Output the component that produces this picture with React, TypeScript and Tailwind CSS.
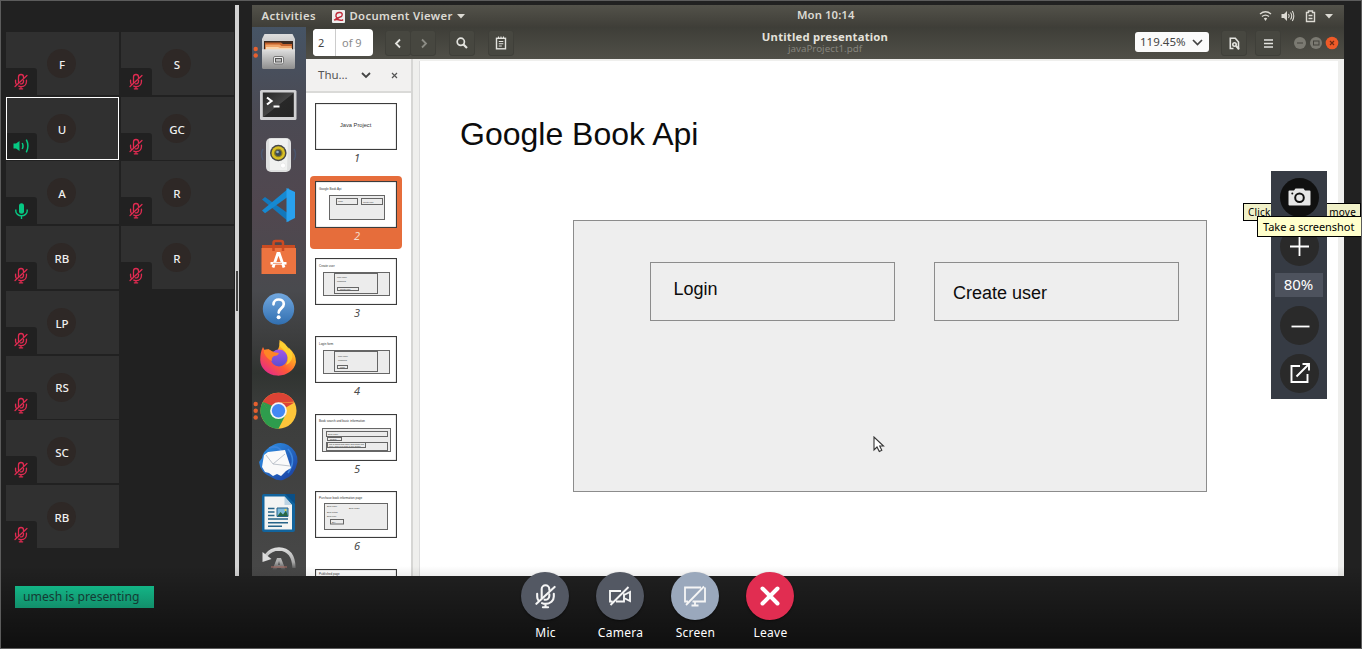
import React from "react";

const ui = "font-['Noto_Sans','Open_Sans',sans-serif]";

function MicOff({ className, stroke = 2.3 }: { className: string; stroke?: number }) {
  return (
    <svg className={className} viewBox="0 0 24 30" fill="none" stroke="currentColor" strokeWidth={stroke} strokeLinecap="round">
      <path d="M7.600 17V7a4.400 4.400 0 0 1 8.800 0v1M16.400 13v2a4.400 4.400 0 0 1-5.500 4.200" />
      <path d="M2.400 12.500v3q0 2 1 4M8 23.200q1.900.9 4 .9c5.500 0 9.600-3.700 9.600-8.600v-3M12 24.500V28M9 28h6M1.500 24L22.500 4.500" />
    </svg>
  );
}

function MicOn() {
  return (
    <svg className="h-4 w-[13px]" viewBox="0 0 13 16">
      <rect x="4" y="0.300" width="5" height="10.500" rx="2.500" fill="#06c983" />
      <path d="M.8 6.500V8a5.700 4.800 0 0 0 11.400 0V6.500M6.500 13v3" fill="none" stroke="#06c983" strokeWidth="1.400" />
    </svg>
  );
}

function Speaking() {
  return (
    <svg className="h-[14px] w-[17px]" viewBox="0 0 17 14" fill="none" stroke="#06c983" strokeWidth="1.500">
      <path d="M.5 4.500H3L6.500 2v10L3 9.500H.5z" fill="#06c983" stroke="none" />
      <path d="M9.200 4q1.600 3 0 6M13.300.7q3.200 6.300 0 12.600" />
    </svg>
  );
}

type Status = "off" | "on" | "talk";

function Tile({ name, status = "off" }: { name: string; status?: Status }) {
  const talking = status === "talk";
  return (
    <div className={"relative flex h-[63px] w-[113px] items-center justify-center bg-[#303030] " + (talking ? "outline outline-1 -outline-offset-1 outline-white" : "")}>
      <div className="mr-[3px] flex size-[29px] items-center justify-center rounded-full bg-[#2e2826] text-[11.500px] font-medium text-[#f0f0f0]">
        <span className="ml-[2px] mt-[2px]">{name}</span>
      </div>
      <div className={"absolute flex items-center justify-center rounded-tr-[3px] bg-[#212121] " + (talking ? "bottom-px left-px h-[26px] w-[30px] pr-px pt-px" : "bottom-0 left-0 h-[27px] w-[31px] pr-px")}>
        {status === "off" && <MicOff className="h-[17px] w-[14px] text-[#df2b51]" />}
        {status === "on" && <MicOn />}
        {talking && <Speaking />}
      </div>
    </div>
  );
}

const colA: [string, Status][] = [["F", "off"], ["U", "talk"], ["A", "on"], ["RB", "off"], ["LP", "off"], ["RS", "off"], ["SC", "off"], ["RB", "off"]];
const colB = ["S", "GC", "R", "R"];

function DockIcon({ children, h = 51 }: { children: React.ReactNode; h?: number }) {
  return (
    <svg width="54" height={h} viewBox={`0 0 54 ${h}`} className="shrink-0">
      {children}
    </svg>
  );
}

function Dock() {
  return (
    <div className="flex w-[54px] shrink-0 flex-col overflow-hidden bg-[linear-gradient(180deg,#465465_0%,#4b4a53_16%,#51474f_33%,#494a4e_48%,#3b3c3c_58%,#303431_63%,#3c3d3c_70%,#484848_100%)]">
      <DockIcon>
        <defs>
          <linearGradient id="cab" x2="0" y2="1"><stop stopColor="#dedede" /><stop offset="1" stopColor="#8e8e8e" /></linearGradient>
        </defs>
        <circle cx="3.700" cy="22" r="2.200" fill="#e6602f" /><circle cx="3.700" cy="28.500" r="2.200" fill="#e6602f" />
        <path d="M12.500 7h28l2.500 5v28a2 2 0 0 1-2 2H12a2 2 0 0 1-2-2V12z" fill="url(#cab)" />
        <path d="M12 14h29v10H12z" fill="#3d2a20" />
        <path d="M13 15.500h16l2 1.500h9v7H13z" fill="#c4622c" />
        <path d="M13.500 17.500h14l2 1.500h10v5h-26z" fill="#f0a468" />
        <path d="M14 20h12l2 1h12v3H14z" fill="#fbd5ac" />
        <path d="M10 22.500h33V40a2 2 0 0 1-2 2H12a2 2 0 0 1-2-2z" fill="url(#cab)" />
        <path d="M10 23h33" stroke="#ddd" />
        <rect x="21.500" y="29.500" width="10" height="7.500" rx="1.500" fill="#eee" stroke="#777" /><rect x="23.500" y="31.500" width="6" height="3.500" fill="#bbb" stroke="#555" />
      </DockIcon>
      <DockIcon>
        <defs><linearGradient id="term" x2="1" y2="1"><stop stopColor="#252525" /><stop offset=".5" stopColor="#444" /><stop offset=".52" stopColor="#282828" /><stop offset="1" stopColor="#252525" /></linearGradient></defs>
        <rect x="8" y="12" width="36.500" height="30" rx="1.500" fill="#d0d0d2" />
        <rect x="10.800" y="14.500" width="31" height="24.500" fill="url(#term)" />
        <path d="M15 19.500l4.500 3.500L15 26.500" stroke="#fff" strokeWidth="2.200" fill="none" /><path d="M21.500 28.500h6" stroke="#fff" strokeWidth="2" />
      </DockIcon>
      <DockIcon>
        <path d="M11 20q-3 5 0 11M42 20q3 5 0 11" stroke="#446899" strokeWidth="1.500" fill="none" opacity=".4" />
        <rect x="14" y="9" width="25" height="34" rx="5" fill="#dedfdf" />
        <path d="M17 10h19l-1 31H18z" fill="#f0f1f0" />
        <circle cx="26.300" cy="24" r="8.300" fill="#484848" /><circle cx="26.300" cy="24" r="6.800" fill="#d9c024" />
        <circle cx="26.300" cy="24" r="4.300" fill="#8c7d20" /><circle cx="26.300" cy="24" r="3" fill="#3c4a57" /><circle cx="25.500" cy="23" r="1.300" fill="#9ab0bf" />
        <circle cx="31" cy="36.500" r="2.500" fill="#fff" stroke="#ddd" strokeWidth=".5" />
      </DockIcon>
      <DockIcon>
        <path d="M10 19.500l3-2.500L37 34v8z" fill="#1378bc" />
        <path d="M10 30.500l3 2.800L37 16V8z" fill="#1689d2" />
        <path d="M34.500 8L43 12v26l-8.500 4.300V17z" fill="#29a1ee" />
      </DockIcon>
      <DockIcon>
        <path d="M21.500 20v-8q0-2 2-2h5.500q2 0 2 2v8" fill="none" stroke="#cc4a22" strokeWidth="2.500" />
        <path d="M10 14h33v4H10z" fill="#c94c22" /><path d="M9.500 17h34.500v26H9.500z" fill="#ed7440" />
        <path d="M21.500 20v-5M31 20v-5" stroke="#cc4a22" strokeWidth="2.500" />
        <path d="M21 36.500l4.800-14h1.400l4.800 14" fill="none" stroke="#fff" strokeWidth="2.800" /><path d="M18.500 32.300h16" stroke="#fff" strokeWidth="2.600" /><path d="M21 32.300h9" stroke="#ed7440" strokeWidth=".8" />
      </DockIcon>
      <DockIcon>
        <defs><linearGradient id="help" x2="0" y2="1"><stop stopColor="#72a8df" /><stop offset="1" stopColor="#316fb0" /></linearGradient></defs>
        <circle cx="26.500" cy="27" r="15.700" fill="url(#help)" />
        <path d="M21.500 22.300c0-6.500 10.300-6.200 10.300-.3 0 4.400-5.100 4.300-5.100 8.600" fill="none" stroke="#fff" strokeWidth="2.700" strokeLinecap="round" /><circle cx="26.600" cy="35.200" r="2" fill="#fff" />
      </DockIcon>
      <DockIcon>
        <defs>
          <linearGradient id="fox" x1="1" y1="0" x2=".2" y2="1"><stop stopColor="#fff04a" /><stop offset=".35" stopColor="#ffae22" /><stop offset=".65" stopColor="#ff5a35" /><stop offset="1" stopColor="#e22890" /></linearGradient>
          <linearGradient id="orb" x2="0" y2="1"><stop stopColor="#a257e8" /><stop offset="1" stopColor="#5a4ed0" /></linearGradient>
        </defs>
        <path d="M11 14l2 4 4-2 1 3q3-1 5 0 5-2 4.500-12 6.500 3 8.500 9l1-1q7 6 7 14A18 16 0 0 1 8.200 27q0-8 2.800-13z" fill="url(#fox)" />
        <circle cx="27" cy="25" r="8.500" fill="url(#orb)" />
        <path d="M12 17q5-2 9 2l6 1q-1 3-5 3-3 2-2 5-5-2-8-8z" fill="#ff8526" />
        <path d="M31 16q8 8 3 16 8-4 6-12-3-7-12-11-2 4 3 7z" fill="#ffd735" opacity=".8" />
      </DockIcon>
      <DockIcon>
        {[20, 26.700, 33.500].map((y) => <circle key={y} cx="3.700" cy={y} r="2.200" fill="#e6602f" />)}
        <circle cx="26.500" cy="26.700" r="18" fill="#fdc53a" />
        <path d="M26.500 26.700L10.900 17.700A18 18 0 0 1 42.100 17.700L26.500 18.500z" fill="#dc4335" />
        <path d="M10.900 17.700A18 18 0 0 0 26.500 44.700l7.100-14-7 3-7-3z" fill="#2e9c4d" />
        <path d="M10.900 17.700l8.500 13L27 18.500z" fill="#dc4335" /><path d="M10.900 17.700l8.500 14.500 4-9z" fill="#2e9c4d" />
        <path d="M19 18.500h23.500L33 24z" fill="#dc4335" />
        <circle cx="26.500" cy="26.700" r="8.400" fill="#f4f4f4" /><circle cx="26.500" cy="26.700" r="6.700" fill="#4388f4" />
      </DockIcon>
      <DockIcon>
        <defs><linearGradient id="bird" x2="1" y2="1"><stop stopColor="#3198ea" /><stop offset="1" stopColor="#193a9c" /></linearGradient></defs>
        <path d="M18 12q9-7 18-2 10 6 9.500 17Q43 41 31 45q-6 1-10-2Q8 38 7 27l3-4q1-7 8-11z" fill="url(#bird)" />
        <path d="M17 13q10-4 14 6M36 14q9 11 0 24" stroke="#3d86dd" strokeWidth="1.600" fill="none" />
        <path d="M12 20l4-3 17-2 6 18-5 3-5 5-4-2-4 2-4-3-4-1-3-5 1-6z" fill="#fafafa" />
        <path d="M14 20l7 9 12-10M21 29l17 2" fill="none" stroke="#b8bec7" strokeWidth=".9" />
      </DockIcon>
      <DockIcon>
        <path d="M12 8h23l8 9v27q0 2-2 2H12q-2 0-2-2V10q0-2 2-2z" fill="#12649d" /><path d="M33 8h10v10z" fill="#0a4f86" />
        <path d="M12.500 10.500h20L40 19v24.500H12.500z" fill="#f3f4f3" /><path d="M32.500 10.500V19H40z" fill="#bcd4e4" />
        <path d="M16 22.500h6.500M16 26h6.500M16 29.500h6.500M16 33h20M16 36.700h20M16 40.200h14" stroke="#266388" strokeWidth="1.500" />
        <path d="M25 22h11v8.500H25z" fill="#7dbadc" stroke="#266388" /><path d="M25.500 30l3-4 2.500 2.500 3-4 2 5.500z" fill="#286744" /><circle cx="33.500" cy="24" r="1" fill="#f5d73a" />
      </DockIcon>
      <DockIcon h={39}>
        <defs><linearGradient id="upd" gradientUnits="userSpaceOnUse" x1="0" y1="10" x2="0" y2="33"><stop stopColor="#e2e2e2" /><stop offset=".65" stopColor="#aaa" /><stop offset="1" stopColor="#484848" /></linearGradient></defs>
        <path d="M14 18.500q5-6.500 13-6.500Q41.500 12.500 42 31" fill="none" stroke="url(#upd)" strokeWidth="3.300" />
        <path d="M10.500 15l0 10 9-3z" fill="#ddd" /><path d="M20 34l5-13h4l5 13h-4l-1-3h-4l-1 3z" fill="url(#upd)" /><path d="M26 28l1-4 1 4z" fill="#555" /><path d="M19 30h16" stroke="#ae6e65" strokeWidth="2" opacity=".5" />
      </DockIcon>
    </div>
  );
}

function Box({ x, y, w, h }: { x: number; y: number; w: number; h: number }) {
  return <rect x={x + 0.5} y={y + 0.5} width={w} height={h} fill="#ececec" stroke="#666" strokeWidth="1" />;
}

function Lbl({ x, y, s = 3, children }: { x: number; y: number; s?: number; children: string }) {
  return <text x={x} y={y} fontSize={s} fill="#333" fontFamily="Liberation Sans, sans-serif">{children}</text>;
}

function Thumb({ n, selected, children }: { n?: number; selected?: boolean; children: React.ReactNode }) {
  return (
    <div className={"flex w-[92px] shrink-0 flex-col items-center rounded-[4px] pt-[5px] " + (n ? "h-[73px] " : "h-[12px] overflow-hidden ") + (selected ? "bg-[#e66d3b]" : "")}>
      <svg width="82" height="47" viewBox="0 0 82 47" className="shrink-0 bg-white">
        {children}
        <rect x=".5" y=".5" width="81" height="46" fill="none" stroke="#3c3c3c" strokeWidth="1.200" />
      </svg>
      {n && <span className={"ml-[2px] text-[11px] italic leading-[16px] " + (selected ? "text-[#f5dccb]" : "text-[#4c4c4c]")}>{n}</span>}
    </div>
  );
}

function Thumbs() {
  return (
    <div className="flex min-h-0 flex-1 flex-col items-center gap-[4.700px] overflow-hidden bg-white pr-[5px] pt-[5px]">
      <Thumb n={1}><Lbl x={25} y={24} s={5.700}>Java Project</Lbl></Thumb>
      <Thumb n={2} selected>
        <Lbl x={4} y={9} s={3}>Google Book Api</Lbl><Box x={14} y={14} w={55} h={24} /><Box x={21} y={17} w={21} h={6} /><Box x={46} y={17} w={21} h={6} /><Lbl x={23} y={21} s={2}>Login</Lbl><Lbl x={48} y={21.500} s={2}>Create user</Lbl>
      </Thumb>
      <Thumb n={3}>
        <Lbl x={4} y={8.500}>Create user</Lbl><Box x={8} y={14} w={66} h={23} /><Box x={19} y={15} w={43} h={20} /><Lbl x={22} y={20} s={2}>User name</Lbl><Lbl x={22} y={24} s={2}>Password</Lbl><Box x={22} y={29} w={21} h={3} /><Lbl x={25} y={32} s={2}>Create user</Lbl>
      </Thumb>
      <Thumb n={4}>
        <Lbl x={4} y={8.500}>Login form</Lbl><Box x={8} y={14} w={66} h={23} /><Box x={19} y={15} w={43} h={20} /><Lbl x={23} y={21} s={2}>User name</Lbl><Lbl x={23} y={25} s={2}>Password</Lbl><Box x={22} y={29} w={10} h={3} /><Lbl x={25} y={32} s={2}>Login</Lbl>
      </Thumb>
      <Thumb n={5}>
        <Lbl x={4} y={8}>Book search and basic information</Lbl><Box x={7} y={14} w={68} h={23} /><Box x={11} y={17} w={61} h={5} /><Lbl x={13} y={21} s={2}>Book name</Lbl><Box x={12} y={23} w={14} h={3} /><Lbl x={15} y={26} s={2}>Search</Lbl><Box x={11} y={28} w={61} h={8} /><Box x={12} y={28} w={38} h={5} /><Lbl x={14} y={30.500} s={2}>List of books with name and author and</Lbl><Lbl x={14} y={32.800} s={2}>price. Click on a book to see details</Lbl>
      </Thumb>
      <Thumb n={6}>
        <Lbl x={4} y={8}>Purchase book information page</Lbl><Box x={9} y={12} w={63} h={26} /><Lbl x={12} y={16} s={2}>Book name</Lbl><Lbl x={34} y={18} s={2}>Book image</Lbl><Lbl x={12} y={22} s={2}>Book author</Lbl><Lbl x={12} y={26} s={2}>Book price</Lbl><Box x={15} y={28} w={13} h={4.500} /><Lbl x={17} y={32} s={2}>Buy</Lbl>
      </Thumb>
      <Thumb><Lbl x={4} y={6}>Published page</Lbl></Thumb>
    </div>
  );
}

const headBtn = "flex h-[26px] w-[26px] items-center justify-center rounded-[3px] border border-[#3f3f39] bg-[#474740] text-[#e4e4df]";

function ViewerHeader() {
  return (
    <div className="grid h-8 shrink-0 grid-cols-[1fr_auto_1fr] items-center bg-gradient-to-b from-[#3e3e38] to-[#504f48]">
      <div className="flex items-center pl-[7px]">
        <div className="-mt-px flex h-[27px] w-[60px] overflow-hidden rounded-[4px] bg-white text-[11px] leading-[27px] text-[#444]">
          <span className="w-[23px] border-r border-[#ccc] bg-white pl-[5px]">2</span>
          <span className="pl-[6px] text-[#8b8b8b]">of 9</span>
        </div>
        <div className="ml-3 flex">
          <div className={headBtn}><svg width="8" height="11" viewBox="0 0 8 11"><path d="M6 1.500l-4 4 4 4" fill="none" stroke="currentColor" strokeWidth="1.800" /></svg></div>
          <div className={headBtn + " -ml-px"}><svg className="ml-0.5" width="8" height="11" viewBox="0 0 8 11"><path d="M2 1.500l4 4-4 4" fill="none" stroke="#8c8c85" strokeWidth="1.800" /></svg></div>
        </div>
        <div className={headBtn + " ml-[13px]"}><svg width="12" height="12" viewBox="0 0 12 12" fill="none" stroke="currentColor"><circle cx="4.800" cy="4.800" r="3.600" strokeWidth="1.700" /><path d="M7.500 7.500l3.500 3.500" strokeWidth="2.200" /></svg></div>
        <div className={headBtn + " ml-[13px]"}><svg width="12" height="14" viewBox="0 0 12 14" fill="none" stroke="currentColor"><rect x="1.500" y="2.300" width="9" height="10.500" strokeWidth="1.400" /><path d="M3.500.5v2M6 .5v2M8.500.5v2M3.800 5.500h4.500M3.800 7.800h4.500M3.800 10h3" strokeWidth="1.100" /></svg></div>
      </div>
      <div className="flex flex-col items-center">
        <span className="-mt-[3px] text-[11.300px] font-bold leading-[13px] tracking-[0.200px] text-[#e4e2dc]">Untitled presentation</span>
        <span className="text-[9.800px] leading-[11px] text-[#85847d]">javaProject1.pdf</span>
      </div>
      <div className="flex items-center justify-end pr-[5px]">
        <div className="-mt-[2px] flex h-[20px] w-[74px] items-center justify-between rounded-[3px] bg-[#fbfbfb] pl-[5px] pr-[6px] text-[11.500px] text-[#454545]">
          119.45%
          <svg width="11" height="7" viewBox="0 0 11 7"><path d="M1 1l4.500 4.500L10 1" fill="none" stroke="#444" strokeWidth="1.700" /></svg>
        </div>
        <div className={headBtn + " ml-3"}><svg width="11" height="13" viewBox="0 0 11 13" fill="none" stroke="currentColor" strokeWidth="1.600"><path d="M4.500 11.500H1.300V1.300h5L9.500 5v7.500" /><circle cx="5.500" cy="7.500" r="1.700" /><path d="M7 9l3 3" strokeWidth="2" /></svg></div>
        <div className={headBtn + " ml-2"}><svg width="9" height="9" viewBox="0 0 9 9"><path d="M0 1h9M0 4.500h9M0 8h9" stroke="currentColor" strokeWidth="1.500" /></svg></div>
        <svg className="-mt-px ml-[13px]" width="45" height="14" viewBox="0 0 45 14">
          <circle cx="6" cy="7" r="6" fill="#7b7a72" /><path d="M3 7h6" stroke="#44433d" />
          <circle cx="22" cy="7" r="6" fill="#7b7a72" /><rect x="19.500" y="5" width="5.500" height="4" fill="none" stroke="#44433d" />
          <circle cx="38" cy="7" r="6.300" fill="#ee5a28" /><path d="M36 5l4 4M40 5l-4 4" stroke="#6d2a12" strokeWidth="1.200" />
        </svg>
      </div>
    </div>
  );
}

function TopBar() {
  return (
    <div className="grid h-[22px] shrink-0 grid-cols-[545px_auto_1fr] items-center bg-gradient-to-b from-[#53524a] to-[#3f3e38] text-[11.300px] font-semibold text-[#dcdad3]">
      <div className="flex items-center pl-[9.500px]">
        <span className="w-[71px] tracking-[0.400px]">Activities</span>
        <svg className="-ml-px" width="13" height="13" viewBox="0 0 13 13"><rect width="13" height="13" rx="1" fill="#eee" /><path d="M2 10q3-1 5.500 0T11 9.500M7 8.500Q3.500 8 4 5t4-2.500 1.500 4L3.500 9" fill="none" stroke="#c02b3a" strokeWidth="1.400" /></svg>
        <span className="ml-[5px] tracking-[0.350px]">Document Viewer</span>
        <svg className="ml-1" width="8" height="5" viewBox="0 0 8 5"><path d="M0 0h8L4 4.500z" fill="#dcdad3" /></svg>
      </div>
      <span className="-mt-px tracking-[0.100px]">Mon 10:14</span>
      <svg className="mr-[10px] justify-self-end" width="76" height="14" viewBox="0 0 76 14" fill="none" stroke="#dcdad3" strokeWidth="1.400">
        <path d="M2 5q5.500-4.500 11 0M4 7.500q3.500-2.800 7 0" /><path d="M5.800 9.300q1.700-1 3.400 0L7.500 12z" fill="#dcdad3" stroke="none" />
        <path d="M23.500 5h2.500l3-3v10l-3-3h-2.500z" fill="#dcdad3" stroke="none" /><path d="M30.500 5q1.500 2 0 4M32.500 3.500q2.500 3.500 0 7M34.300 2q3 5 0 10" strokeWidth="1.100" />
        <path d="M48.500 12.500V3.500h2v-1.500h4v1.500h2v9z" /><path d="M50.500 6.500h4M50.500 9.500h4" strokeWidth="1.600" />
        <path d="M67 5h8l-4 4.500z" fill="#dcdad3" stroke="none" />
      </svg>
    </div>
  );
}

function Slide() {
  return (
    <div className="min-w-0 flex-1 border-l-2 border-[#d6d6d4] bg-[#efefed] pl-[6px] pr-[6px] pt-[2px]">
      <div className="relative h-full border-l border-[#dcdcdc] bg-white pl-[40px] pt-[53px] font-['Liberation_Sans',Arial,sans-serif] text-[#0c0c0c]">
        <div className="h-[40px] text-[32px] leading-[40px]">Google Book Api</div>
        <div className="ml-[113px] mt-[66px] flex h-[272px] w-[634px] gap-[39px] border border-[#8c8c8c] bg-[#eeeeee] pl-[76px] pt-[41px] text-[18px]">
          <div className="h-[59px] w-[245px] border border-[#8c8c8c] pl-[22.500px] pt-[13px] leading-[27px]">Login</div>
          <div className="h-[59px] w-[245px] border border-[#8c8c8c] pl-[18px] pt-[17px] leading-[27px]">Create user</div>
        </div>
        <svg className="absolute left-[453px] top-[375px]" width="12" height="17" viewBox="0 0 12 17"><path d="M1 1v13l3-3 2.300 4.500 2.500-1.200L6.700 10H10.500z" fill="#fff" stroke="#333" strokeWidth="1.100" /></svg>
      </div>
    </div>
  );
}

function SharedScreen() {
  return (
    <div className={"flex h-[571px] w-[1092px] flex-col overflow-hidden " + ui}>
      <TopBar />
      <div className="flex min-h-0 flex-1">
        <Dock />
        <div className="flex min-w-0 flex-1 flex-col">
          <ViewerHeader />
          <div className="flex min-h-0 flex-1">
            <div className="flex w-[105px] shrink-0 flex-col">
              <div className="flex h-[34px] shrink-0 items-center border-b-2 border-[#dadad8] bg-[#f2f1f0] pl-3 text-[11.500px] text-[#555]">
                <span className="w-[43px]">Thu…</span>
                <svg width="10" height="7" viewBox="0 0 10 7"><path d="M1 1l4 4 4-4" fill="none" stroke="#444" strokeWidth="1.800" /></svg>
                <svg className="ml-[20px]" width="7" height="7" viewBox="0 0 7 7"><path d="M1 1l5 5M6 1L1 6" stroke="#555" strokeWidth="1.200" /></svg>
              </div>
              <Thumbs />
            </div>
            <Slide />
          </div>
        </div>
      </div>
    </div>
  );
}

function ZoomTools() {
  const circle = "flex size-[39px] shrink-0 items-center justify-center rounded-full bg-[#2a2a2a]";
  return (
    <div className="absolute left-[1271px] top-[171px] flex h-[228px] w-14 flex-col items-center bg-[#363b44] pt-[7px]">
      <div className="flex size-[39px] shrink-0 items-center justify-center rounded-full bg-[#101010]">
        <svg className="-mt-[2px] ml-px" width="23" height="18" viewBox="0 0 23 18"><path d="M1.500 2.500H6L7.500.5h8L17 2.500h4.500a1 1 0 0 1 1 1V16.500a1 1 0 0 1-1 1h-20a1 1 0 0 1-1-1v-13a1 1 0 0 1 1-1z" fill="#e6e6e6" /><circle cx="11.500" cy="9.800" r="4.300" fill="none" stroke="#101010" strokeWidth="2" /><circle cx="4.300" cy="5.500" r="1" fill="#101010" /></svg>
      </div>
      <div className={circle + " mt-[10px]"}><svg className="ml-px" width="19" height="19" viewBox="0 0 19 19"><path d="M9.500 0v19M0 9.500h19" stroke="#fff" strokeWidth="1.800" /></svg></div>
      <div className="mt-[7px] flex h-6 w-12 shrink-0 items-center justify-center bg-[#4d525d] pb-[2px] pr-px text-[15px] text-white">80%</div>
      <div className={circle + " mt-[8.500px]"}><svg className="ml-[2px]" width="19" height="19" viewBox="0 0 19 19"><path d="M0.500 10.500h18" stroke="#fff" strokeWidth="1.800" /></svg></div>
      <div className={circle + " mt-[9px]"}><svg className="ml-[2px]" width="20" height="20" viewBox="0 0 20 20" fill="none" stroke="#fff" strokeWidth="1.900"><path d="M10 3H1.500v16h16v-8M12.500 1H19v6.500M19 1L6.500 13.500" /></svg></div>
    </div>
  );
}

function Control({ label, color, children }: { label: string; color: string; children: React.ReactNode }) {
  return (
    <div className="flex w-[75px] flex-col items-center">
      <div className={"flex size-12 items-center justify-center rounded-full text-[#f5f5f5] shadow-[0_1px_2px_rgba(0,0,0,0.5)] " + color}>{children}</div>
      <span className="ml-px mt-px text-[12px] leading-[24px] tracking-[0.250px] text-white">{label}</span>
    </div>
  );
}

export default function App() {
  return (
    <div className={"relative h-[649px] w-[1362px] overflow-hidden border border-[#5c5c5c] bg-[#212121] " + ui}>
      <div className="flex pt-[4px]">
        <div className="flex h-[571px] w-[234px] shrink-0 gap-[2px] pl-[5px] pt-[27.100px]">
          <div className="flex flex-col gap-[1.700px]">
            {colA.map(([name, status], i) => <Tile key={i} name={name} status={status} />)}
          </div>
          <div className="flex flex-col gap-[1.700px]">
            {colB.map((name, i) => <Tile key={i} name={name} />)}
          </div>
        </div>
        <div className="mr-[13px] flex h-[571px] w-1 shrink-0 items-center justify-center bg-[#d3d3d3]">
          <div className="h-10 w-[2px] bg-[#444]" />
        </div>
        <SharedScreen />
      </div>

      <div className="absolute inset-x-0 bottom-0 h-[82px] bg-gradient-to-b from-transparent to-black/55" />

      <div className="absolute left-[14px] top-[585px] h-[22px] w-[139px] bg-gradient-to-b from-[#13b586] to-[#128f6b] pl-2 text-[12.200px] leading-[21px] text-[#143b34]">
        umesh is presenting
      </div>

      <div className="absolute left-[506.500px] top-[571px] flex">
        <Control label="Mic" color="bg-[#535863]"><MicOff className="h-[26px] w-[21px]" stroke={2.4} /></Control>
        <Control label="Camera" color="bg-[#535863]">
          <svg width="24" height="20" viewBox="0 0 24 20" fill="none" stroke="currentColor" strokeWidth="1.900"><path d="M13 5H2v10.500h2.500M8 15.500h8v-8M16 9l6-3v9l-6-3M2.500 19L20.500 1" /></svg>
        </Control>
        <Control label="Screen" color="bg-[#9aa8bc]">
          <svg width="24" height="22" viewBox="0 0 24 22" fill="none" stroke="currentColor" strokeWidth="1.800"><path d="M18 2.500H2v14h3M9.500 16.500H22v-14M12 17v3M8.500 20.500h7M3 20L21 1.500" /></svg>
        </Control>
        <Control label="Leave" color="bg-[#e12d51]">
          <svg width="20" height="20" viewBox="0 0 20 20"><path d="M2.500 2.500l15 15M17.500 2.500l-15 15" stroke="#fff" strokeWidth="4" strokeLinecap="round" /></svg>
        </Control>
      </div>

      <div className="absolute left-[1242px] top-[202px] flex h-[18px] w-[118px] justify-between border border-black bg-[#f0f0c8] px-1 text-[10px] leading-[16px] tracking-[0.200px] text-black">
        <span>Click</span>
        <span>move</span>
      </div>
      <div className="absolute inset-0 -left-px -top-px">
        <ZoomTools />
      </div>
      <div className="absolute left-[1256px] top-[215px] h-[21px] w-[110px] border border-black bg-[#ffffcc] pl-[5px] text-[11px] leading-[19px] text-black">
        <span className="whitespace-nowrap tracking-[-0.050px]">Take a screenshot</span>
      </div>
    </div>
  );
}
